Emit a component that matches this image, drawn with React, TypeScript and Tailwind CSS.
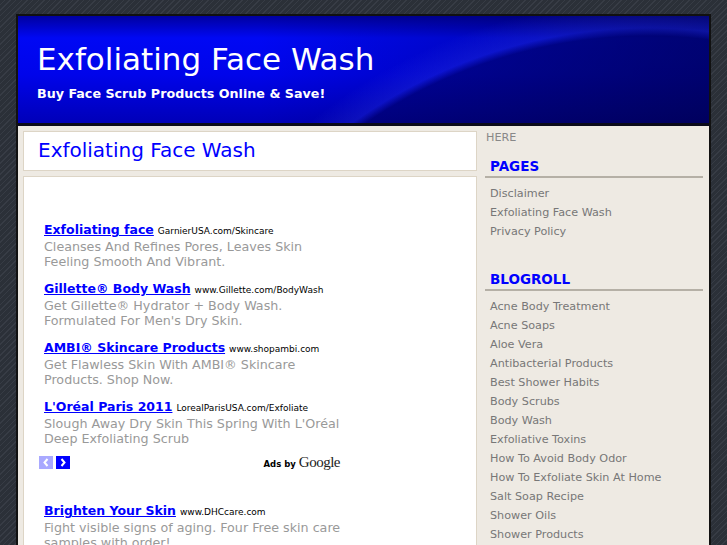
const ads1 = [
  {
    title: "Exfoliating face",
    url: "GarnierUSA.com/Skincare",
    lines: ["Cleanses And Refines Pores, Leaves Skin", "Feeling Smooth And Vibrant."],
  },
  {
    title: "Gillette® Body Wash",
    url: "www.Gillette.com/BodyWash",
    lines: ["Get Gillette® Hydrator + Body Wash.", "Formulated For Men's Dry Skin."],
  },
  {
    title: "AMBI® Skincare Products",
    url: "www.shopambi.com",
    lines: ["Get Flawless Skin With AMBI® Skincare", "Products. Shop Now."],
  },
  {
    title: "L'Oréal Paris 2011",
    url: "LorealParisUSA.com/Exfoliate",
    lines: ["Slough Away Dry Skin This Spring With L'Oréal", "Deep Exfoliating Scrub"],
  },
];

const pages = ["Disclaimer", "Exfoliating Face Wash", "Privacy Policy"];

const blogroll = [
  "Acne Body Treatment",
  "Acne Soaps",
  "Aloe Vera",
  "Antibacterial Products",
  "Best Shower Habits",
  "Body Scrubs",
  "Body Wash",
  "Exfoliative Toxins",
  "How To Avoid Body Odor",
  "How To Exfoliate Skin At Home",
  "Salt Soap Recipe",
  "Shower Oils",
  "Shower Products",
];

function Ad({ title, url, lines }: { title: string; url: string; lines: string[] }) {
  return (
    <div className="mb-[10px] whitespace-nowrap">
      <div className="h-[19px] text-[12.5px] leading-[19px]">
        <a className="font-bold text-[#0000ff] underline">{title}</a>{" "}
        <span className="text-[9px] text-black">{url}</span>
      </div>
      {lines.map((l) => (
        <div key={l} className="h-[15px] text-[12.7px] leading-[15px] text-[#999999]">
          {l}
        </div>
      ))}
    </div>
  );
}

function SideHeading({ children }: { children: string }) {
  return (
    <div className="border-b-2 border-[#b5b0a6] pl-[5px] pb-[1px] text-[13.5px] font-bold leading-[18px] text-[#0000ff]">
      {children}
    </div>
  );
}

export default function App() {
  return (
    <div className="min-h-[545px] overflow-hidden bg-[#2b3038] bg-[repeating-linear-gradient(135deg,#2b3038_0px,#2b3038_3px,#373c45_3px,#373c45_4px)] pt-[14px] pl-[16px] font-['DejaVu_Sans',sans-serif]">
      <div className="w-[695px] border-2 border-b-0 border-[#111111] bg-[#eeeae3]">
        {/* header */}
        <div className="h-[110px] border-b-[3px] border-[#0a0a1a] bg-[#0000d8] bg-[image:radial-gradient(circle_510px_at_630px_520px,rgba(0,0,50,0.5)_0px,rgba(0,0,60,0.4)_500px,rgba(70,90,255,0.18)_508px,rgba(0,0,255,0)_535px),linear-gradient(to_right,rgba(0,0,0,0)_35%,rgba(0,0,40,0.45)_100%),linear-gradient(to_bottom,#0000a0_0px,#0008f4_22px,#0004ea_55%,#0000b8_100%)] px-[19px] pt-[24px]">
          <div className="text-[31px] leading-[38px] text-white">Exfoliating Face Wash</div>
          <div className="mt-[8px] text-[12.7px] font-bold leading-[16px] text-white">
            Buy Face Scrub Products Online &amp; Save!
          </div>
        </div>

        {/* body */}
        <div className="flex h-[420px] items-start">
          <div className="ml-[5px] mt-[5px] w-[454px]">
            <div className="h-[40px] border border-[#ddd5c6] bg-white pl-[14px] pt-[5px] text-[20px] leading-[26px] text-[#0000ff]">
              Exfoliating Face Wash
            </div>
            <div className="mt-[5px] h-[400px] border border-[#ddd5c6] bg-white pl-[20px] pt-[43px]">
              <div className="w-[297px]">
                {ads1.map((a) => (
                  <Ad key={a.title} {...a} />
                ))}
                <div className="-ml-[5px] mt-[1px] flex h-[13px] items-center justify-between">
                  <div className="flex gap-[3px]">
                    <span className="flex h-[13px] w-[14px] items-center justify-center bg-[#a9a9ff]">
                      <svg width="8" height="9" viewBox="0 0 8 9">
                        <path d="M5.5 1 L2.5 4.5 L5.5 8" stroke="white" strokeWidth="2" fill="none" />
                      </svg>
                    </span>
                    <span className="flex h-[13px] w-[14px] items-center justify-center bg-[#0000ff]">
                      <svg width="8" height="9" viewBox="0 0 8 9">
                        <path d="M2.5 1 L5.5 4.5 L2.5 8" stroke="white" strokeWidth="2" fill="none" />
                      </svg>
                    </span>
                  </div>
                  <div className="flex items-baseline gap-[3px] pr-[1px]">
                    <span className="text-[8.5px] font-bold text-black">Ads by</span>
                    <span className="font-['Liberation_Serif',serif] text-[15px] tracking-[-0.5px] text-[#222]">
                      Google
                    </span>
                  </div>
                </div>
                <div className="mt-[32px]">
                  <Ad
                    title="Brighten Your Skin"
                    url="www.DHCcare.com"
                    lines={["Fight visible signs of aging. Four Free skin care", "samples with order!"]}
                  />
                </div>
              </div>
            </div>
          </div>

          {/* sidebar */}
          <div className="ml-[8px] w-[218px] text-[11.2px] text-[#777777]">
            <div className="mt-[5px] pl-[1px] leading-[14px] text-[#888888]">HERE</div>
            <div className="mt-[12px]">
              <SideHeading>PAGES</SideHeading>
              <div className="mt-[6px] pl-[5px]">
                {pages.map((p) => (
                  <div key={p} className="leading-[19px]">
                    {p}
                  </div>
                ))}
              </div>
            </div>
            <div className="mt-[29px]">
              <SideHeading>BLOGROLL</SideHeading>
              <div className="mt-[6px] pl-[5px]">
                {blogroll.map((p) => (
                  <div key={p} className="leading-[19px]">
                    {p}
                  </div>
                ))}
              </div>
            </div>
          </div>
        </div>
      </div>
    </div>
  );
}
